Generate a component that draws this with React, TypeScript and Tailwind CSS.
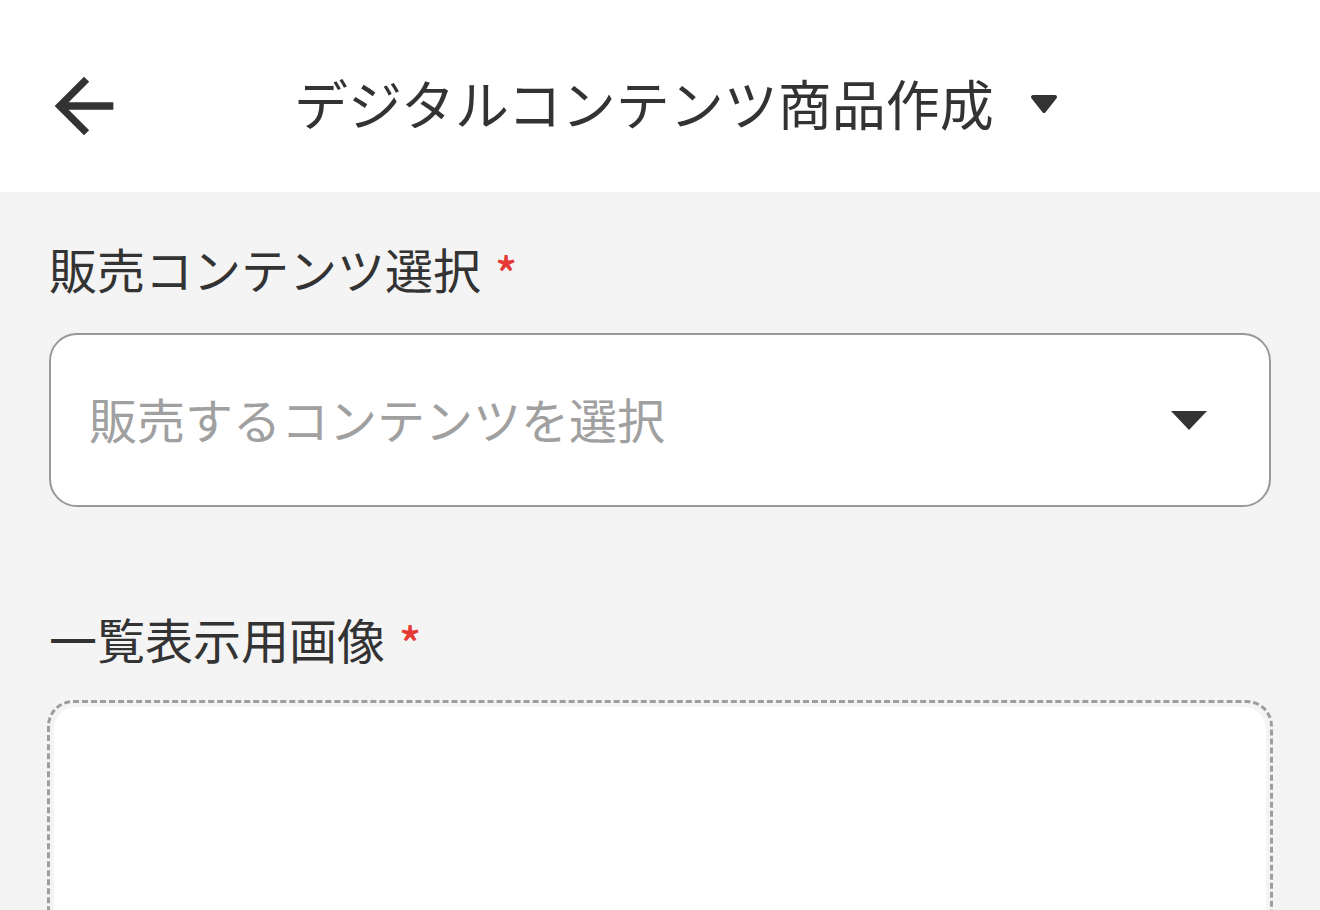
const font = { fontFamily: '"Noto Sans CJK JP", "Noto Sans", sans-serif' };

const Caret = ({ className }: { className: string }) => (
  <svg viewBox="0 0 36 19" className={className} fill="#333333">
    <path d="M0 0h36L18 19z" />
  </svg>
);

const Required = () => (
  <span className="ml-[14px] mt-[5px] h-[40px] text-[46px] leading-none font-medium text-[#e53935]">*</span>
);

const App = () => {
  return (
    <div className="min-h-screen flex flex-col bg-[#f4f4f4] text-[#333333]" style={font}>
      {/* Header */}
      <header className="h-[192px] bg-white flex items-center pt-[20px]">
        <button className="ml-[40px] w-[88px] h-[88px] flex items-center justify-center">
          <svg viewBox="0 0 24 24" className="w-[88px] h-[88px]" fill="#333333">
            <path d="M20 11H7.83l5.59-5.59L12 4l-8 8 8 8 1.41-1.41L7.83 13H20v-2z" />
          </svg>
        </button>
        <div className="ml-[166px] flex items-center -mt-[6px]">
          <h1 className="text-[54px] leading-none font-normal">デジタルコンテンツ商品作成</h1>
          <svg viewBox="0 0 28 20" className="ml-[36px] w-[28px] h-[20px] mt-[2px]">
            <path
              d="M3 3h22L14 17z"
              fill="#333333"
              stroke="#333333"
              strokeWidth="4"
              strokeLinejoin="round"
            />
          </svg>
        </div>
      </header>

      {/* Form */}
      <main className="flex-grow px-[49px] pt-[52px]">
        <div className="flex items-start">
          <span className="text-[48px] leading-none">販売コンテンツ選択</span>
          <Required />
        </div>

        <div className="mt-[41px] h-[174px] bg-white border-2 border-[#999999] rounded-[28px] flex items-center justify-between pl-[38px] pr-[62px]">
          <span className="text-[48px] leading-none text-[#a0a0a0] -mt-[4px]">販売するコンテンツを選択</span>
          <Caret className="w-[36px] h-[19px]" />
        </div>

        <div className="mt-[107px] flex items-start">
          <span className="text-[48px] leading-none">一覧表示用画像</span>
          <Required />
        </div>

        <div className="mt-[38px] -mx-[2px] border-[3px] border-dashed border-[#9e9e9e] rounded-[26px] p-[4px]">
          <div className="h-[300px] bg-white rounded-[22px]" />
        </div>
      </main>
    </div>
  );
};

export default App;
